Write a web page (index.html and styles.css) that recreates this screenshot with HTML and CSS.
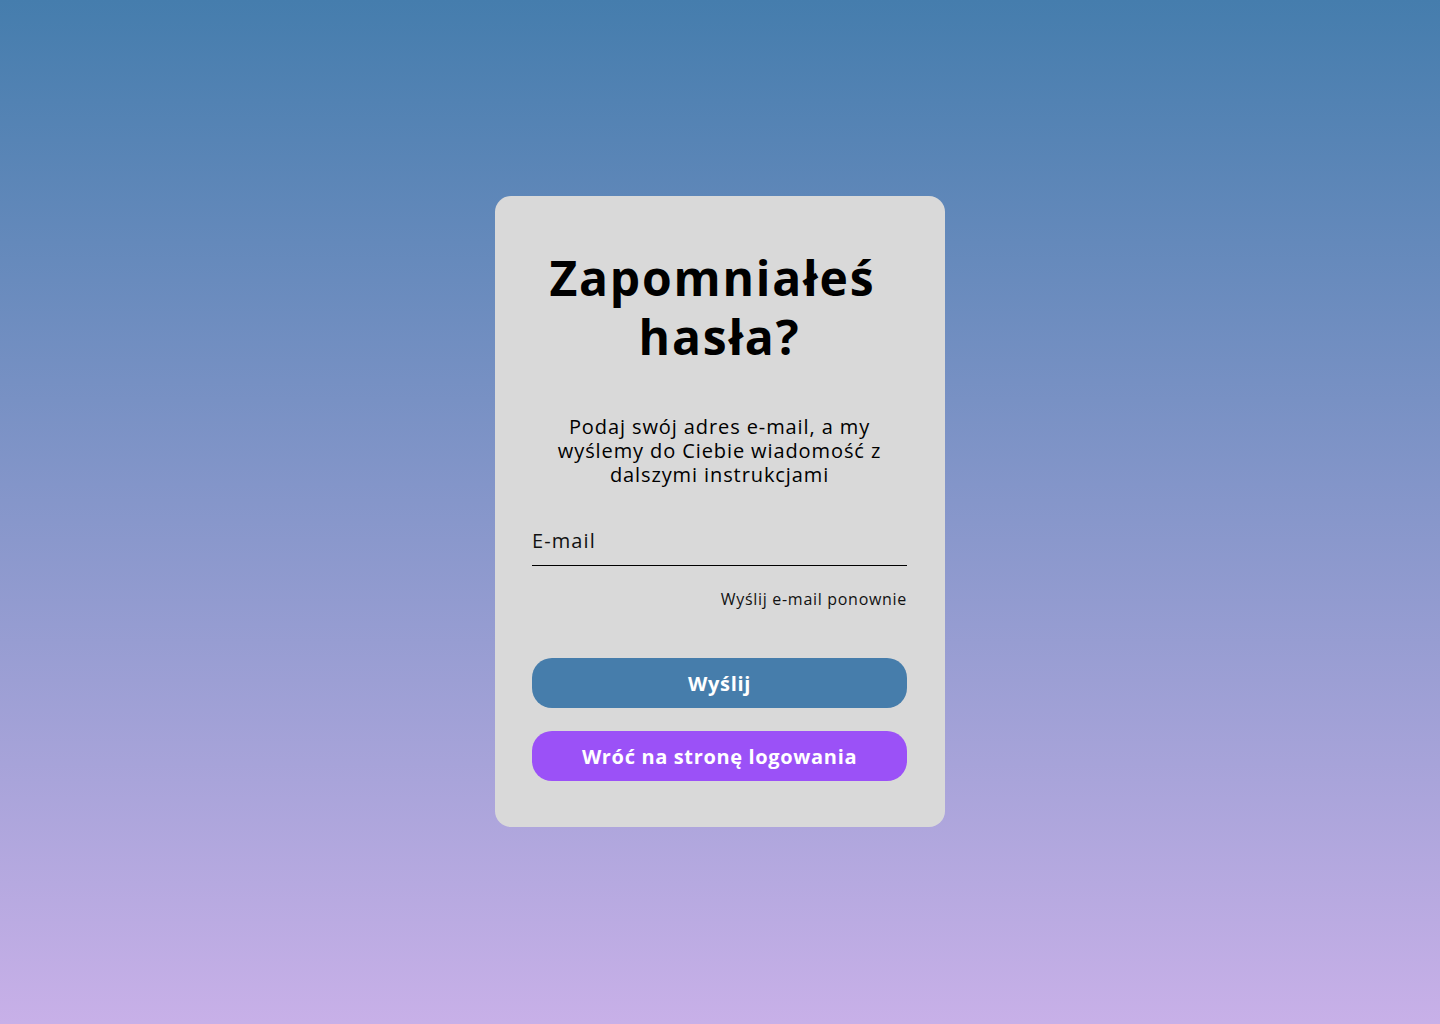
FILE: index.html
```html
<!DOCTYPE html>
<html lang="pl">
<head>
<meta charset="utf-8">
<title>Zapomniałeś hasła?</title>
<link rel="stylesheet" href="styles.css">
</head>
<body>
<main class="page">
  <section class="card">
    <h1 class="title">Zapomniałeś&nbsp;<br>hasła?</h1>
    <p class="lead">Podaj swój adres e-mail, a my wyślemy do Ciebie wiadomość z dalszymi instrukcjami</p>
    <form class="form">
      <label class="field">
        <input class="input" type="email" placeholder="E-mail">
      </label>
      <div class="resend-row"><a class="resend" href="#">Wyślij e-mail ponownie</a></div>
      <button class="btn btn-primary" type="button">Wyślij</button>
      <button class="btn btn-secondary" type="button">Wróć na stronę logowania</button>
    </form>
  </section>
</main>
</body>
</html>
```

FILE: styles.css
```css
* { box-sizing: border-box; }
html, body { margin: 0; height: 100%; }
body {
  font-family: "Open Sans", "Noto Sans", "Liberation Sans", sans-serif;
  background: linear-gradient(180deg, #457dad 0%, #c8b0e8 100%);
  color: #000;
}
.page {
  height: 1024px;
  display: flex;
  justify-content: center;
  align-items: flex-start;
  padding-top: 196px;
}
.card {
  width: 450px;
  height: 631px;
  background: #d9d9d9;
  border-radius: 16px;
  padding: 52px 38px 0 37px;
  display: flex;
  flex-direction: column;
  align-items: center;
}
.title {
  margin: 0;
  font-size: 48px;
  line-height: 59px;
  font-weight: 700;
  letter-spacing: 1.8px;
  text-align: center;
}
.lead {
  margin: 49px 0 0;
  width: 340px;
  font-size: 20px;
  line-height: 24px;
  letter-spacing: 0.9px;
  text-align: center;
}
.form {
  width: 100%;
  margin-top: 32px;
  display: flex;
  flex-direction: column;
}
.field { display: block; }
.input {
  width: 100%;
  border: 0;
  border-bottom: 1px solid #000;
  background: transparent;
  font: inherit;
  font-size: 20px;
  letter-spacing: 1.1px;
  padding: 8px 0 11px;
  outline: none;
  color: #000;
}
.input::placeholder { color: #111; opacity: 1; }
.resend-row {
  display: flex;
  justify-content: flex-end;
  margin-top: 23px;
}
.resend {
  font-size: 16px;
  line-height: 20px;
  letter-spacing: 0.7px;
  color: #111;
  text-decoration: none;
}
.btn {
  height: 50px;
  border: 0;
  border-radius: 20px;
  font: inherit;
  font-size: 20px;
  font-weight: 700;
  letter-spacing: 0.65px;
  color: #fff;
  cursor: pointer;
}
.btn-primary { background: #467dab; margin-top: 49px; }
.btn-secondary { background: #9b51f7; margin-top: 23px; }
```
